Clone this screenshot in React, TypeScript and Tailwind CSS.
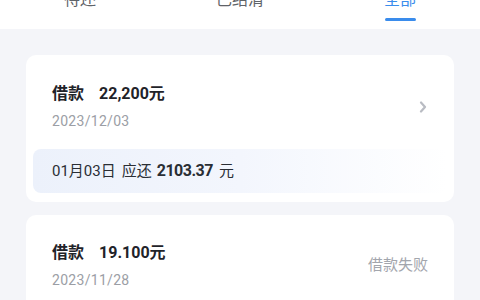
const font = { fontFamily: 'Roboto, "Noto Sans CJK SC", "Noto Sans", sans-serif' }

const tabs = ["待还", "已结清", "全部"]

const Chevron = () => (
  <svg width="8" height="12" viewBox="0 0 8 12" fill="none" className="mr-[1px]">
    <path
      d="M2 1.5 L6 6 L2 10.5"
      stroke="#b9bcc3"
      strokeWidth="2.2"
      strokeLinecap="round"
      strokeLinejoin="round"
    />
  </svg>
)

const App = () => {
  return (
    <div className="w-[480px] h-[300px] overflow-hidden bg-[#f4f5f9]" style={font}>
      {/* tab bar, scrolled so the labels are cut off */}
      <div className="h-[29px] overflow-hidden bg-white grid grid-cols-3">
        {tabs.map((t, i) => (
          <div key={t} className="flex flex-col items-center">
            <span
              className={
                i === 2
                  ? "mt-[-11px] text-[16px] leading-[22px] text-[#3a8cec]"
                  : "mt-[-11px] text-[16px] leading-[22px] text-[#5f6368]"
              }
            >
              {t}
            </span>
            {i === 2 && (
              <div className="mt-[7px] h-[3px] w-[31px] rounded-full bg-[#3a8cec]" />
            )}
          </div>
        ))}
      </div>

      <div className="px-[26px] pt-[26px] flex flex-col gap-[13px]">
        {/* card 1 */}
        <div className="bg-white rounded-[10px] pt-[27px] pb-[9px] px-[7px]">
          <div className="flex items-center pl-[19px] pr-[19px]">
            <div className="flex-1">
              <div className="flex items-center h-[24px] text-[#1f2329] font-bold text-[16px]">
                <span>借款</span>
                <span className="ml-[15px]">22,200元</span>
              </div>
              <div className="mt-[5px] h-[20px] leading-[20px] text-[14px] tracking-[0.3px] text-[#9b9ea5]">
                2023/12/03
              </div>
            </div>
            <Chevron />
          </div>
          <div className="mt-[18px] h-[44px] rounded-[8px] bg-linear-to-r from-[#ecf1fb] via-[#f3f6fd] to-white flex items-center px-[19px] text-[#2a2e35]">
            <span className="text-[15px]">01月03日</span>
            <span className="ml-[6px] text-[15px]">应还</span>
            <span className="ml-[5px] text-[16px] font-bold tracking-[-0.5px]">2103.37</span>
            <span className="ml-[6px] text-[15px]">元</span>
          </div>
        </div>

        {/* card 2 */}
        <div className="bg-white rounded-[10px] pt-[26px] pb-[20px] px-[26px]">
          <div className="flex items-center">
            <div className="flex-1">
              <div className="flex items-center h-[24px] text-[#1f2329] font-bold text-[16px]">
                <span>借款</span>
                <span className="ml-[15px]">19.100元</span>
              </div>
              <div className="mt-[5px] h-[20px] leading-[20px] text-[14px] tracking-[0.3px] text-[#9b9ea5]">
                2023/11/28
              </div>
            </div>
            <span className="text-[15px] text-[#a3a6ad]">借款失败</span>
          </div>
        </div>
      </div>
    </div>
  )
}

export default App
